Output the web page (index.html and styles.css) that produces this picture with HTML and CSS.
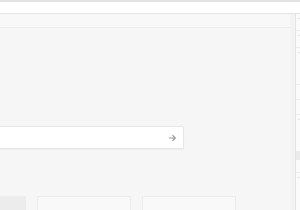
FILE: index.html
```html
<!DOCTYPE html>
<html>
<head>
<meta charset="utf-8">
<link rel="stylesheet" href="styles.css">
</head>
<body>
<div class="topstrip"></div>
<div class="topbar"></div>
<div class="body">
  <div class="main">
    <div class="main-head"></div>
    <div class="main-content">
      <div class="spacer"></div>
      <div class="input">
        <span class="field"></span>
        <svg class="arrow" width="9" height="8" viewBox="0 0 9 8"><path d="M1 4h6M4.5 1.2L7.3 4 4.5 6.8" fill="none" stroke="#9a9a9a" stroke-width="1.2"/></svg>
      </div>
      <div class="spacer2"></div>
      <div class="cards">
        <div class="chip"></div>
        <div class="card"></div>
        <div class="card"></div>
      </div>
    </div>
  </div>
  <div class="gutter"></div>
  <div class="panel">
    <div class="prow r1"><span class="mk">·</span></div>
    <div class="prow r2"><span class="mk">·</span></div>
    <div class="prow r3"><span class="mk">·</span></div>
    <div class="prow r4"></div>
    <div class="prow r5"></div>
    <div class="prow r6"><span class="mk">·</span></div>
    <div class="prow r7 sel"></div>
    <div class="prow r8"></div>
    <div class="prow r9"><span class="mk">·</span></div>
  </div>
</div>
</body>
</html>
```
FILE: styles.css
```css
* { box-sizing: border-box; }
html, body { margin: 0; padding: 0; }
body {
  width: 300px; height: 210px; overflow: hidden;
  background: #f7f7f7;
  font-family: "Liberation Sans", Arial, sans-serif;
  font-size: 8px; color: #ccc;
}
.topstrip { height: 2px; background: #e2e2e2; }
.topbar { height: 12px; background: #fff; border-bottom: 1px solid #e4e4e4; }
.body { display: flex; height: 196px; }
.main { width: 290px; display: flex; flex-direction: column; background: #f6f6f6; }
.main-head { height: 14px; background: #f8f8f8; border-bottom: 1px solid #ececec; flex: none; }
.main-content { flex: 1; display: flex; flex-direction: column; }
.spacer { height: 98px; flex: none; }
.input {
  width: 184px; height: 23px; flex: none;
  background: #fff; border: 1px solid #e6e6e6; border-left: none;
  border-radius: 0 2px 2px 0;
  box-shadow: 0 1px 1px rgba(0,0,0,0.04);
  display: flex; align-items: center; justify-content: flex-end; padding-right: 6px;
}
.arrow { display: block; }
.spacer2 { height: 47px; flex: none; }
.cards { display: flex; gap: 11px; flex: 1; }
.chip { width: 26px; background: #ececec; }
.card { width: 94px; background: #f9f9f9; border: 1px solid #ebebeb; border-bottom: none; border-radius: 2px 2px 0 0; }
.gutter { width: 5px; background: #f3f3f3; }
.panel { flex: 1; background: #fbfbfb; border-left: 1px solid #e4e4e4; display: flex; flex-direction: column; }
.prow { border-bottom: 1px solid #ececec; padding-left: 1px; line-height: 1; color: #c8c8c8; flex: none; }
.mk { font-size: 9px; }
.r1 { height: 17px; }
.r2 { height: 17px; }
.r3 { height: 37px; }
.r4 { height: 15px; }
.r5 { height: 15px; }
.r6 { height: 37px; }
.r7 { height: 8px; }
.sel { background: #ebebeb; }
.r8 { height: 13px; }
.r9 { flex: 1; border-bottom: none; }
```
